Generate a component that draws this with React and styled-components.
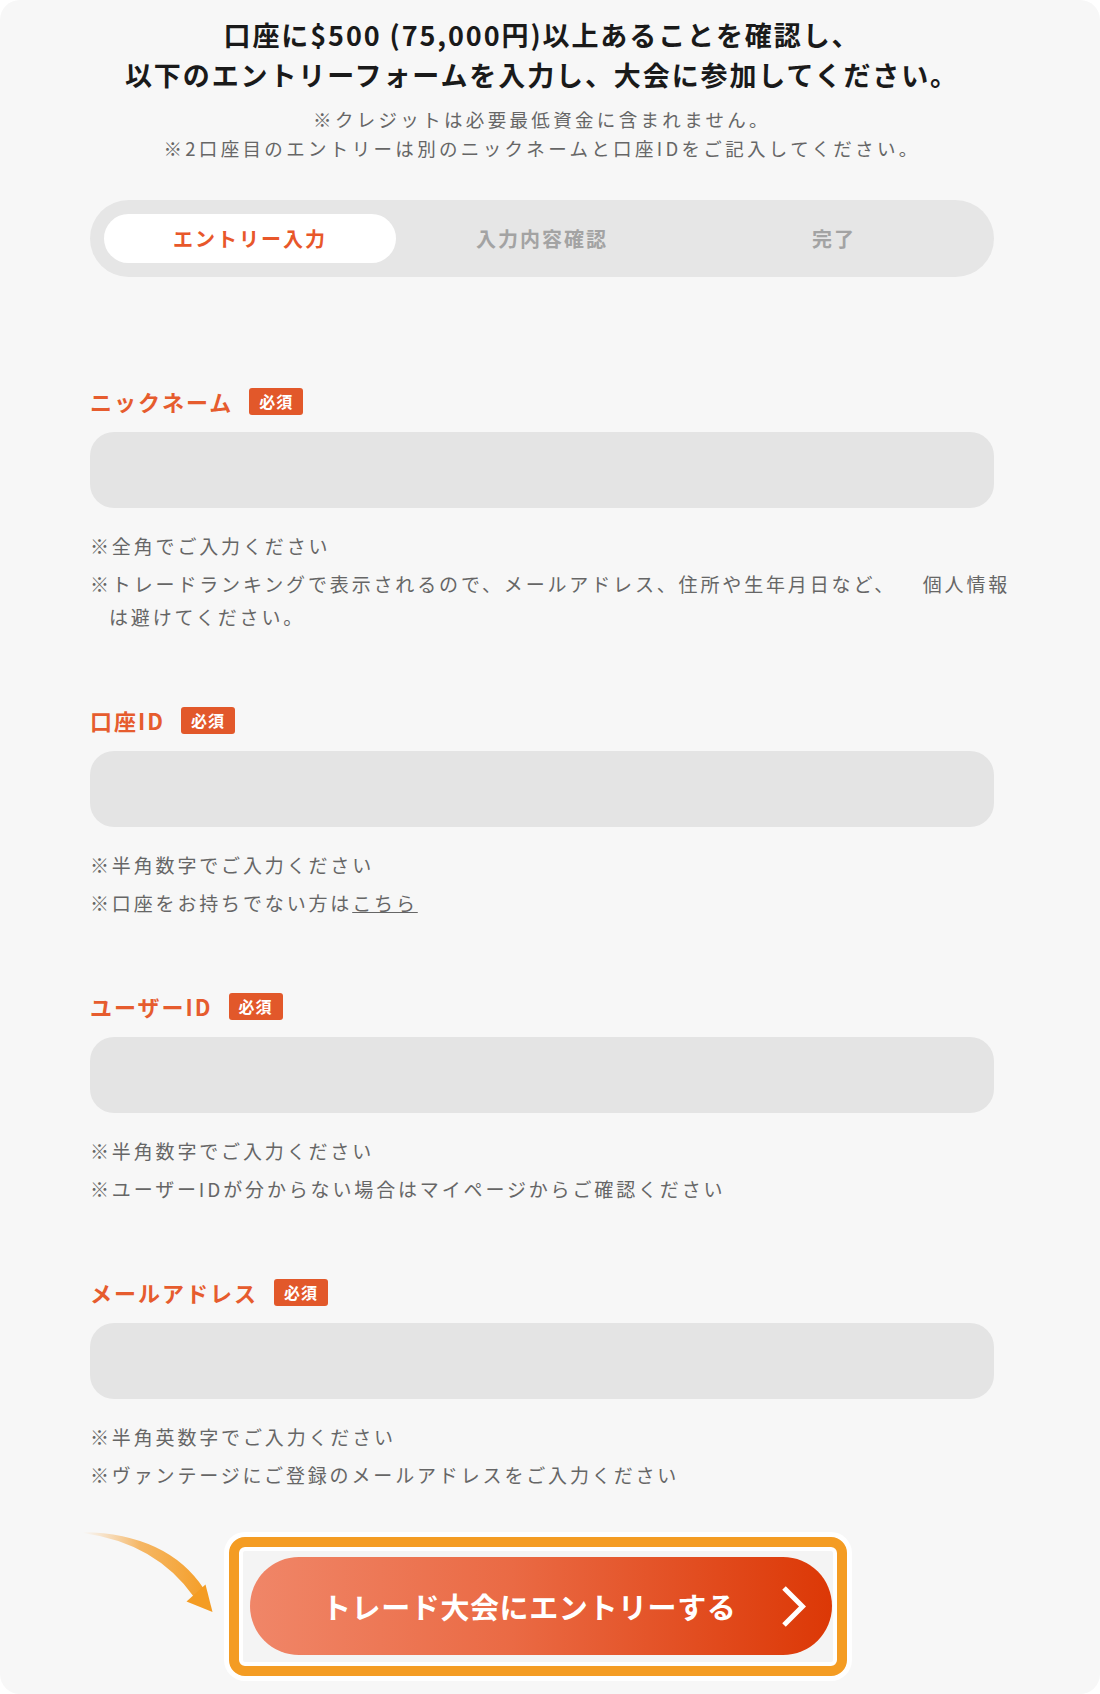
import React from 'react';
import styled, { createGlobalStyle } from 'styled-components';

const GlobalStyle = createGlobalStyle`
  html, body {
    margin: 0;
    padding: 0;
    background: #ffffff;
  }
  * {
    box-sizing: border-box;
  }
  body {
    font-family: "Noto Sans CJK JP", "Noto Sans", sans-serif;
  }
`;

const Card = styled.div`
  width: 1100px;
  min-height: 1694px;
  background: #f7f7f7;
  border-radius: 20px;
  padding: 15px 106px 0 90px;
`;

const Title = styled.h1`
  margin: 0;
  font-size: 27px;
  font-weight: 700;
  line-height: 40px;
  letter-spacing: 1.9px;
  color: #1a1a1a;
  text-align: center;
`;

const Lead = styled.p`
  margin: 10px 0 0;
  font-size: 18.5px;
  line-height: 29px;
  letter-spacing: 0.18em;
  color: #666666;
  text-align: center;
`;

const Steps = styled.div`
  margin-top: 37px;
  display: grid;
  grid-template-columns: repeat(3, 1fr);
  padding: 14px;
  background: #e6e6e6;
  border-radius: 40px;
`;

const Step = styled.div`
  height: 49px;
  display: flex;
  align-items: center;
  justify-content: center;
  border-radius: 25px;
  font-size: 20px;
  font-weight: 700;
  letter-spacing: 2px;
  background: ${(p) => (p.$active ? '#ffffff' : 'transparent')};
  color: ${(p) => (p.$active ? '#e8572a' : '#a3a3a3')};
`;

const Form = styled.div`
  padding-top: 109px;
  display: flex;
  flex-direction: column;
  gap: 72px;
`;

const Field = styled.div`
  display: flex;
  flex-direction: column;
`;

const LabelRow = styled.div`
  height: 30px;
  display: flex;
  align-items: center;
  gap: 16px;
`;

const Label = styled.label`
  font-size: 22px;
  font-weight: 700;
  letter-spacing: 2px;
  color: #e65c2e;
`;

const Required = styled.span`
  width: 54px;
  height: 27px;
  display: inline-flex;
  align-items: center;
  justify-content: center;
  border-radius: 3px;
  background: #e2582a;
  color: #ffffff;
  font-size: 16px;
  font-weight: 700;
  letter-spacing: 1px;
`;

const Input = styled.input`
  margin-top: 16px;
  height: 76px;
  width: 100%;
  border: none;
  outline: none;
  border-radius: 24px;
  background: #e4e4e4;
  padding: 0 24px;
  font-family: inherit;
  font-size: 20px;
`;

const Notes = styled.div`
  margin-top: 21px;
  display: flex;
  flex-direction: column;
  gap: 5px;
`;

const Note = styled.p`
  margin: 0;
  font-size: 19px;
  line-height: 33px;
  letter-spacing: 0.15em;
  color: #666666;
  white-space: nowrap;
  padding-left: 1em;
  text-indent: -1em;

  a {
    color: inherit;
    text-decoration: underline;
  }
`;

const Submit = styled.div`
  margin-top: 46px;
  display: flex;
  align-items: flex-start;
`;

const Arrow = styled.svg`
  flex: none;
  overflow: visible;
`;

const Frame = styled.div`
  border: 10px solid #f49c23;
  border-radius: 16px;
  background: #f4f4f4;
  box-shadow: 0 0 0 5px #ffffff, inset 0 0 0 4px #ffffff;
  padding: 10px 5px 11px 11px;
`;

const EntryButton = styled.button`
  width: 582px;
  height: 98px;
  border: none;
  border-radius: 49px;
  background: linear-gradient(90deg, #f08668 0%, #ea6a44 45%, #dc3806 100%);
  display: flex;
  align-items: center;
  padding: 0 26px 0 72px;
  color: #ffffff;
  font-family: inherit;
  font-size: 29px;
  font-weight: 700;
  letter-spacing: 0.6px;
  cursor: pointer;

  svg {
    margin-left: auto;
  }
`;

const fields = [
  {
    label: 'ニックネーム',
    notes: [
      '※全角でご入力ください',
      <>
        {'※トレードランキングで表示されるので、メールアドレス、住所や生年月日など、\u3000\u00a0\u00a0個人情報'}
        <br />
        は避けてください。
      </>,
    ],
  },
  {
    label: '口座ID',
    notes: [
      '※半角数字でご入力ください',
      <>
        ※口座をお持ちでない方は<a href="#">こちら</a>
      </>,
    ],
  },
  {
    label: 'ユーザーID',
    notes: ['※半角数字でご入力ください', '※ユーザーIDが分からない場合はマイページからご確認ください'],
  },
  {
    label: 'メールアドレス',
    notes: ['※半角英数字でご入力ください', '※ヴァンテージにご登録のメールアドレスをご入力ください'],
  },
];

const App = () => {
  return (
    <>
      <GlobalStyle />
      <Card>
        <Title>
          口座に$500 (75,000円)以上あることを確認し、
          <br />
          以下のエントリーフォームを入力し、大会に参加してください。
        </Title>
        <Lead>
          ※クレジットは必要最低資金に含まれません。
          <br />
          ※2口座目のエントリーは別のニックネームと口座IDをご記入してください。
        </Lead>

        <Steps>
          <Step $active>エントリー入力</Step>
          <Step>入力内容確認</Step>
          <Step>完了</Step>
        </Steps>

        <Form>
          {fields.map((f) => (
            <Field key={f.label}>
              <LabelRow>
                <Label>{f.label}</Label>
                <Required>必須</Required>
              </LabelRow>
              <Input />
              <Notes>
                {f.notes.map((n, i) => (
                  <Note key={i}>{n}</Note>
                ))}
              </Notes>
            </Field>
          ))}
        </Form>

        <Submit>
          <Arrow width="139" height="90" viewBox="0 0 139 90">
            <defs>
              <linearGradient id="arrowFade" x1="-7" y1="0" x2="120" y2="0" gradientUnits="userSpaceOnUse">
                <stop offset="0" stopColor="#f7b565" stopOpacity="0" />
                <stop offset="0.45" stopColor="#f5ab4a" stopOpacity="0.85" />
                <stop offset="1" stopColor="#f49c23" />
              </linearGradient>
            </defs>
            <path d="M -7 -5 Q 78 -3 114 52 L 104 60 Q 66 6 -7 -4 Z" fill="url(#arrowFade)" />
            <polygon points="96.5,64.5 122.5,75 115.5,47.5" fill="#f49c23" />
          </Arrow>
          <Frame>
            <EntryButton>
              トレード大会にエントリーする
              <svg width="25" height="43" viewBox="0 0 25 43">
                <polyline points="3,3 21.5,21.5 3,40" fill="none" stroke="#ffffff" strokeWidth="5" />
              </svg>
            </EntryButton>
          </Frame>
        </Submit>
      </Card>
    </>
  );
};

export default App;
